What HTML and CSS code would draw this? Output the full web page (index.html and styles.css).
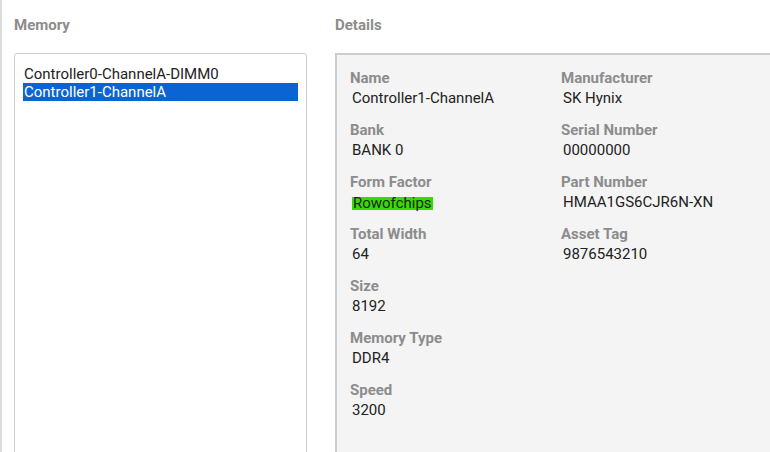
FILE: index.html
```html
<!DOCTYPE html>
<html lang="en">
<head>
  <meta charset="UTF-8" />
  <meta name="viewport" content="width=device-width, initial-scale=1.0"/>
  <title>Memory</title>
  <link rel="stylesheet" href="styles.css">
</head>
<body>
  <div class="page">
    <section class="memory">
      <h2 class="section-title">Memory</h2>
      <ul class="listbox">
        <li class="list-item">Controller0-ChannelA-DIMM0</li>
        <li class="list-item selected">Controller1-ChannelA</li>
      </ul>
    </section>

    <section class="details">
      <h2 class="section-title">Details</h2>
      <div class="panel">
        <div class="column">
          <div class="field">
            <div class="label">Name</div>
            <div class="value">Controller1-ChannelA</div>
          </div>
          <div class="field">
            <div class="label">Bank</div>
            <div class="value">BANK 0</div>
          </div>
          <div class="field">
            <div class="label">Form Factor</div>
            <div class="value"><span class="mark">Rowofchips</span></div>
          </div>
          <div class="field">
            <div class="label">Total Width</div>
            <div class="value">64</div>
          </div>
          <div class="field">
            <div class="label">Size</div>
            <div class="value">8192</div>
          </div>
          <div class="field">
            <div class="label">Memory Type</div>
            <div class="value">DDR4</div>
          </div>
          <div class="field">
            <div class="label">Speed</div>
            <div class="value">3200</div>
          </div>
        </div>
        <div class="column">
          <div class="field">
            <div class="label">Manufacturer</div>
            <div class="value">SK Hynix</div>
          </div>
          <div class="field">
            <div class="label">Serial Number</div>
            <div class="value">00000000</div>
          </div>
          <div class="field">
            <div class="label">Part Number</div>
            <div class="value">HMAA1GS6CJR6N-XN</div>
          </div>
          <div class="field">
            <div class="label">Asset Tag</div>
            <div class="value">9876543210</div>
          </div>
        </div>
      </div>
    </section>
  </div>
</body>
</html>
```

FILE: styles.css
```css
* {
  box-sizing: border-box;
}

html, body {
  margin: 0;
  padding: 0;
  height: 100%;
  overflow: hidden;
  background: #fff;
}

body {
  font-family: Roboto, 'Liberation Sans', sans-serif;
  font-size: 15px;
  color: #222;
}

.page {
  display: flex;
  height: 520px;
  border-left: 2px solid #dcdcdc;
  padding-left: 12px;
}

.section-title {
  margin: 0;
  padding-top: 15px;
  height: 53px;
  font-size: 15px;
  line-height: 20px;
  font-weight: 700;
  color: #8c8c8c;
}

.memory {
  flex: 0 0 293px;
  display: flex;
  flex-direction: column;
}

.listbox {
  flex: 1;
  list-style: none;
  margin: 0;
  padding: 11px 8px;
  border: 1px solid #cfcfcf;
  border-radius: 3px;
}

.list-item {
  height: 18px;
  line-height: 18px;
  padding-left: 1px;
  white-space: nowrap;
}

.list-item.selected {
  background: #0a64d2;
  color: #fff;
}

.details {
  flex: 1;
  min-width: 0;
  margin-left: 28px;
  display: flex;
  flex-direction: column;
}

.panel {
  flex: 1;
  display: flex;
  background: #f4f4f4;
  border-top: 2px solid #cdcdcd;
  border-left: 2px solid #cdcdcd;
  padding: 13px 0 0 13px;
}

.column {
  flex: 0 0 211px;
}

.field {
  margin-bottom: 12px;
}

.label {
  line-height: 20px;
  font-weight: 700;
  color: #8c8c8c;
}

.value {
  line-height: 20px;
  padding-left: 2px;
  color: #222;
}

.mark {
  display: inline-block;
  height: 13px;
  line-height: 13px;
  margin-top: 5px;
  vertical-align: top;
  padding: 0 1px;
  background: #33dd00;
}
```
